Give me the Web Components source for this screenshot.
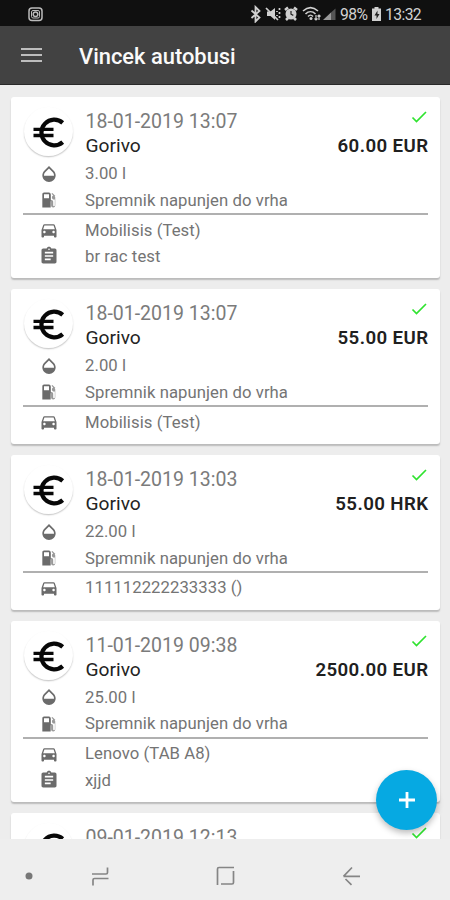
<!DOCTYPE html>
<html lang="hr"><head><meta charset="utf-8"><title>Vincek autobusi</title>
<style>html,body{margin:0;height:100%;overflow:hidden;background:#ededed;font-family:Roboto,"Liberation Sans",sans-serif}</style></head>
<body><fleet-app></fleet-app>
<script>
const define=(name,html)=>customElements.define(name,class extends HTMLElement{
  connectedCallback(){ if(this.shadowRoot)return; const t=document.createElement('template'); t.innerHTML=html; this.attachShadow({mode:'open'}).append(t.content.cloneNode(true)); }
});
const icons={
 drop:'<path d="M17.66 8L12 2.35 6.34 8C4.78 9.56 4 11.64 4 13.64s.78 4.11 2.34 5.67 3.61 2.35 5.66 2.35 4.1-.79 5.66-2.35S20 15.64 20 13.64 19.22 9.56 17.66 8zM6 14c.01-2 .62-3.27 1.76-4.4L12 5.27l4.24 4.38C17.38 10.77 17.99 12 18 14H6z"/>',
 fuel:'<path fill="#999" d="M19.77 7.23l.01-.01-3.72-3.72L15 4.56l2.11 2.11c-.94.36-1.61 1.26-1.61 2.33 0 1.38 1.12 2.5 2.5 2.5.36 0 .69-.08 1-.21v7.21c0 .55-.45 1-1 1s-1-.45-1-1V14c0-1.1-.9-2-2-2h-1V5h-1v8.5h1.5v5a2.5 2.5 0 0 0 5 0V9c0-.69-.28-1.32-.73-1.77z"/><path d="M12 3H6c-1.1 0-2 .9-2 2v16h10V5c0-1.100-.9-2-2-2zm0 7H6V5h6v5z"/>',
 car:'<path d="M18.92 6.01C18.72 5.42 18.16 5 17.5 5h-11c-.66 0-1.21.42-1.42 1.01L3 12v8c0 .55.45 1 1 1h1c.55 0 1-.45 1-1v-1h12v1c0 .55.45 1 1 1h1c.55 0 1-.45 1-1v-8l-2.08-5.99zM6.500 16c-.83 0-1.5-.67-1.5-1.5S5.670 13 6.500 13s1.500.67 1.500 1.500S7.330 16 6.500 16zm11 0c-.83 0-1.500-.67-1.500-1.500s.67-1.500 1.500-1.500 1.500.67 1.500 1.500-.67 1.500-1.500 1.500zM5 11l1.500-4.500h11L19 11H5z"/>',
 note:'<path d="M19 3h-4.180C14.400 1.840 13.300 1 12 1c-1.300 0-2.400.84-2.820 2H5c-1.100 0-2 .9-2 2v14c0 1.100.9 2 2 2h14c1.100 0 2-.9 2-2V5c0-1.100-.9-2-2-2zm-7 0c.55 0 1 .45 1 1s-.45 1-1 1-1-.45-1-1 .45-1 1-1zm2 14H7v-2h7v2zm3-4H7v-2h10v2zm0-4H7V7h10v2z"/>'
};
customElements.define('detail-row',class extends HTMLElement{
  connectedCallback(){ this.attachShadow({mode:'open'}).innerHTML=`<style>
:host{display:grid;grid-template-columns:51px 1fr;height:26.4px;align-items:center;padding-left:11.500px;color:#747474;font-size:16.700px;line-height:26px;letter-spacing:.06px;white-space:pre}
svg{width:20px;height:20px;justify-self:center;fill:#6b6b6b;margin-left:1px}span{padding:1.800px 0 0 11.500px;line-height:24.600px}
</style><svg viewBox="0 0 24 24">${icons[this.getAttribute('icon')]}</svg><span><slot></slot></span>`; }
});
customElements.define('expense-card',class extends HTMLElement{
  connectedCallback(){ const a=n=>this.getAttribute(n); this.attachShadow({mode:'open'}).innerHTML=`<style>
:host{display:block;box-sizing:border-box;height:var(--h,155px);flex:none;background:#fff;border-radius:3px;box-shadow:0 2px 1.500px #bbb;padding-top:11px}
header{display:grid;grid-template-columns:51px 1fr auto;height:52.500px;padding:0 11.500px}
.coin{width:49px;height:49px;border-radius:50%;background:#fff;box-shadow:0 1.200px 1.500px #c8c8c8;justify-self:center;margin-top:-1px}
.coin svg{display:block;width:49px;height:49px}
.main{padding-left:12px;display:flex;flex-direction:column}
.date{font-size:19.500px;line-height:26px;color:#7b7b7b;padding-top:1px}
.name{font-size:19.200px;line-height:25px;color:#242424;margin-top:-2px}
.end{display:flex;flex-direction:column;align-items:flex-end}
.end svg{width:20px;height:26px;margin-top:-1px}
b{font-size:18.700px;line-height:25px;font-weight:600;color:#202020;letter-spacing:.4px;margin:1px -.5px 0 0}
hr{margin:0 11.500px 1.500px;border:0;height:2px;background:#b0b0b0}
</style><header><div class="coin"><svg viewBox="0 0 49 49" fill="none" stroke="#080808"><path d="M38.700 15.900A12.800 12.800 0 1 0 38.700 35.100" stroke-width="4.200"/><path d="M9.500 22.400H29.500M9.500 28.500H29.500" stroke-width="3.400"/></svg></div>
<div class="main"><span class="date">${a('date')}</span>${a('name')?`<span class="name">${a('name')}</span>`:''}</div>
<div class="end"><svg viewBox="0 0 20 26" fill="none" stroke="#2fe32f" stroke-width="1.700"><path d="M4.500 10.500l4 4 9.500-9.500"/></svg><b>${a('amount')}</b></div></header>
<slot name="fuel"></slot><hr><slot></slot>`; }
});
define('status-bar',`<style>:host{display:flex;align-items:center;box-sizing:border-box;height:26px;background:#101010;color:#d2d2d2;padding:2px 28px 0 28px;font-size:15.700px}
.right{margin-left:auto;display:flex;align-items:center}svg{display:block}span{white-space:nowrap;letter-spacing:-.6px}</style>
<svg width="15" height="15" viewBox="0 0 15 15" fill="none" stroke="#bbb" stroke-width="1.500"><rect x="1" y="1" width="13" height="12.500" rx="3"/><rect x="3.500" y="3.500" width="8" height="7.500" rx="1.500" stroke-width="1"/><circle cx="7.500" cy="7.300" r="2.300"/></svg>
<div class="right"><svg width="92" height="18" viewBox="0 0 92 18" fill="none" stroke="#d0d0d0" stroke-width="1.800">
<path d="M1.500 5.500l8 7-4 4V2l4 4-8 7"/>
<path d="M17 6.500h3.500L25 3v12l-4.500-4H17z" fill="#d0d0d0" stroke="none"/><path d="M16 3l12 12M27 6v1m0 3v1m2.500-8v2m0 2v2m0 2v2" stroke-width="1.700"/>
<circle cx="41" cy="9" r="5.500" fill="#d0d0d0" stroke="none"/><path d="M35 5l3-2.500M47 5l-3-2.500M36 15l2-2M46 15l-2-2" stroke-width="2.500"/><path d="M41 6v3.200l2.300 1.200" stroke="#222" stroke-width="1.200"/>
<path d="M53 6c5-4.500 10-4.500 15 0M55.500 9c3-3 7-3 10 0M58 11.500c2-2 3-2 5 0" stroke-width="1.600"/><circle cx="61" cy="13.500" r="1.500" fill="#d0d0d0" stroke="none"/><path d="M66 10v5m-1.500-1.500L66 15l1.500-1.500M69 15v-5m-1.500 1.500l1.500-1.500 1.500 1.500" stroke-width="1.200"/>
<path d="M73 15h8V7.500z" fill="#999" stroke="none"/><path d="M81 15h4.500V3.500L81 7.500z" fill="#555" stroke="none"/></svg>
<span style="width:31px;margin-left:-2px">98%</span>
<svg width="12" height="15" viewBox="0 0 12 15"><path d="M3.500 1.500V0h4v1.500H10V14H1V1.500z" fill="#d0d0d0"/><path d="M6.500 3.500L3.500 8.500h2V12l3-5h-2z" fill="#222"/></svg><span style="width:37px;margin-left:2px">13:32</span></div>`);
define('app-header',`<style>:host{display:flex;align-items:center;box-sizing:border-box;height:59px;background:#424242;border-bottom:1.500px solid #292929;padding:3px 21px 0;color:#fafafa}
svg{width:21px;height:16px;margin:-3px 37px 0 0}h1{margin:0;font-size:21.900px;font-weight:500;line-height:30px;white-space:nowrap}</style>
<svg viewBox="0 0 21 16" stroke="#bdbdbd" stroke-width="2.200"><path d="M0 2h21M0 8h21M0 14h21"/></svg><h1><slot></slot></h1>`);
define('add-button',`<style>:host{position:absolute;right:13px;bottom:9px;width:61px;height:60px;border-radius:50%;background:#06a9e2;box-shadow:0 3px 6px #0004}svg{display:block}</style><svg width="61" height="60" stroke="#fff" stroke-width="2.800"><path d="M23 30h16M31 22v16"/></svg>`);
define('nav-bar',`<style>:host{display:block;height:61px;background:#eee}svg{display:block}</style><svg width="450" height="61" fill="none" stroke="#858585" stroke-width="1.700"><circle cx="29" cy="37" r="3.500" fill="#777" stroke="none"/><path d="M92 35h14q1.500 0 1.500-1.500v-5M108.500 39.500H94.500q-1.500 0-1.500 1.500v5.500"/><path d="M217.500 46V30q0-1.500 1.500-1.500h15M233.500 32v11.500q0 1.500-1.500 1.500H221"/><path d="M360 37.300H343.500M352 28.500l-8.500 8.800M345.500 40l6 5.800"/></svg>`);
define('fleet-app',`<style>:host{display:flex;flex-direction:column;height:900px;width:450px}
main{height:754px;box-sizing:border-box;position:relative;overflow:hidden;padding:12px 10.500px 0 11px;display:flex;flex-direction:column;gap:10.900px}
expense-card.tall{--h:181.100px}
</style><status-bar></status-bar><app-header>Vincek autobusi</app-header><main>
<expense-card class="tall" name="Gorivo" date="18-01-2019 13:07" amount="60.00 EUR"><detail-row slot="fuel" icon="drop">3.00 l</detail-row><detail-row slot="fuel" icon="fuel">Spremnik napunjen do vrha</detail-row><detail-row icon="car">Mobilisis (Test)</detail-row><detail-row icon="note">br rac test</detail-row></expense-card>
<expense-card name="Gorivo" date="18-01-2019 13:07" amount="55.00 EUR"><detail-row slot="fuel" icon="drop">2.00 l</detail-row><detail-row slot="fuel" icon="fuel">Spremnik napunjen do vrha</detail-row><detail-row icon="car">Mobilisis (Test)</detail-row></expense-card>
<expense-card name="Gorivo" date="18-01-2019 13:03" amount="55.00 HRK"><detail-row slot="fuel" icon="drop">22.00 l</detail-row><detail-row slot="fuel" icon="fuel">Spremnik napunjen do vrha</detail-row><detail-row icon="car">111112222233333 ()</detail-row></expense-card>
<expense-card class="tall" name="Gorivo" date="11-01-2019 09:38" amount="2500.00 EUR"><detail-row slot="fuel" icon="drop">25.00 l</detail-row><detail-row slot="fuel" icon="fuel">Spremnik napunjen do vrha</detail-row><detail-row icon="car">Lenovo (TAB A8)</detail-row><detail-row icon="note">xjjd</detail-row></expense-card>
<expense-card date="09-01-2019 12:13" amount=""></expense-card>
<add-button></add-button></main><nav-bar></nav-bar>`);
</script></body></html>
